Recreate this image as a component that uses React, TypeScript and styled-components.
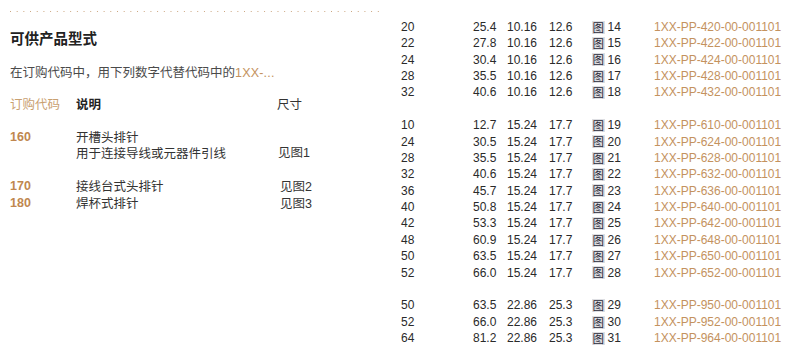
import styled, { createGlobalStyle } from "styled-components";

interface PartRow {
  pins: string;
  length: string;
  pitch: string;
  height: string;
  fig: number;
  code: string;
}

interface OrderOption {
  code: string;
  lines: string[];
  size: string;
  indent?: boolean;
}

const GlobalStyle = createGlobalStyle`
  html, body {
    margin: 0;
    padding: 0;
    background: #ffffff;
  }
  body {
    font-family: "Liberation Sans", Arial, "Noto Sans CJK SC", sans-serif;
    color: #333333;
    overflow: hidden;
  }
`;

const Page = styled.div`
  display: flex;
  width: 800px;
  height: 355px;
  overflow: hidden;
`;

const LeftPanel = styled.section`
  width: 390px;
  flex-shrink: 0;
  padding: 11px 0 0 10px;
  box-sizing: border-box;
`;

const DottedRule = styled.div`
  width: 372px;
  height: 1px;
  background-image: linear-gradient(to right, #caa47e 1px, transparent 1px);
  background-size: 6.7px 1px;
`;

const Title = styled.h2`
  margin: 16px 0 0;
  font-family: "Noto Sans CJK SC", sans-serif;
  font-size: 14.5px;
  font-weight: bold;
  line-height: 20px;
  color: #222222;
`;

const Intro = styled.p`
  margin: 15.8px 0 0;
  font-family: "Noto Sans CJK SC", sans-serif;
  font-size: 12.5px;
  line-height: 16.4px;
  color: #4a4a4a;
`;

const Accent = styled.span`
  font-family: "Liberation Sans", Arial, sans-serif;
  color: #c4925e;
  letter-spacing: 0.2px;
`;

const OrderTable = styled.div`
  margin-top: 14.6px;
  display: flex;
  flex-direction: column;
`;

const OrderRow = styled.div<{ $gapBefore?: boolean }>`
  display: grid;
  grid-template-columns: 66px 201px 1fr;
  line-height: 16.4px;
  font-size: 12.5px;
  font-family: "Noto Sans CJK SC", sans-serif;
  margin-top: ${(p) => (p.$gapBefore ? "16.4px" : "0")};
`;

const HeadCode = styled.span`
  color: #c9a070;
`;

const HeadLabel = styled.span`
  font-weight: bold;
  color: #222222;
`;

const OptionCode = styled.span`
  font-family: "Liberation Sans", Arial, sans-serif;
  font-weight: bold;
  font-size: 12.5px;
  color: #c0874f;
`;

const OptionText = styled.div`
  display: flex;
  flex-direction: column;
  color: #333333;

  & > div {
    height: 16.4px;
  }
`;

const SizeCell = styled.span<{ $indent?: boolean }>`
  align-self: end;
  padding-left: ${(p) => (p.$indent ? "3px" : "1px")};
  color: #333333;
  & b {
    font-weight: normal;
    font-family: "Liberation Sans", Arial, sans-serif;
  }
`;

const RightPanel = styled.section`
  flex: 1;
  padding: 18.8px 0 0 11px;
  display: flex;
  flex-direction: column;
`;

const Group = styled.div`
  display: flex;
  flex-direction: column;
  & + & {
    margin-top: 16.4px;
  }
`;

const PartLine = styled.div`
  display: grid;
  grid-template-columns: 72px 34px 42px 43px 62px 1fr;
  height: 16.4px;
  line-height: 16.4px;
  font-size: 12px;
  color: #2a2a2a;
  white-space: nowrap;
`;

const FigCell = styled.span`
  display: flex;
  align-items: center;
  gap: 3px;
`;

const FigMark = styled.span`
  font-family: "Noto Sans CJK SC", sans-serif;
  font-size: 11.5px;
  line-height: 13px;
  background: #dedfe3;
  color: #2b2b3a;
  padding: 0 0.5px;
`;

const CodeCell = styled.span`
  color: #c4925e;
`;

const options: OrderOption[] = [
  { code: "160", lines: ["开槽头排针", "用于连接导线或元器件引线"], size: "1" },
  { code: "170", lines: ["接线台式头排针"], size: "2", indent: true },
  { code: "180", lines: ["焊杯式排针"], size: "3", indent: true },
];

const mk = (
  pins: number,
  length: string,
  pitch: string,
  height: string,
  fig: number,
  series: number
): PartRow => ({
  pins: String(pins),
  length,
  pitch,
  height,
  fig,
  code: `1XX-PP-${series}${String(pins).padStart(2, "0")}-00-001101`,
});

const groups: PartRow[][] = [
  [
    mk(20, "25.4", "10.16", "12.6", 14, 4),
    mk(22, "27.8", "10.16", "12.6", 15, 4),
    mk(24, "30.4", "10.16", "12.6", 16, 4),
    mk(28, "35.5", "10.16", "12.6", 17, 4),
    mk(32, "40.6", "10.16", "12.6", 18, 4),
  ],
  [
    mk(10, "12.7", "15.24", "17.7", 19, 6),
    mk(24, "30.5", "15.24", "17.7", 20, 6),
    mk(28, "35.5", "15.24", "17.7", 21, 6),
    mk(32, "40.6", "15.24", "17.7", 22, 6),
    mk(36, "45.7", "15.24", "17.7", 23, 6),
    mk(40, "50.8", "15.24", "17.7", 24, 6),
    mk(42, "53.3", "15.24", "17.7", 25, 6),
    mk(48, "60.9", "15.24", "17.7", 26, 6),
    mk(50, "63.5", "15.24", "17.7", 27, 6),
    mk(52, "66.0", "15.24", "17.7", 28, 6),
  ],
  [
    mk(50, "63.5", "22.86", "25.3", 29, 9),
    mk(52, "66.0", "22.86", "25.3", 30, 9),
    mk(64, "81.2", "22.86", "25.3", 31, 9),
  ],
];

const App = () => {
  return (
    <Page>
      <GlobalStyle />
      <LeftPanel>
        <DottedRule />
        <Title>可供产品型式</Title>
        <Intro>
          在订购代码中，用下列数字代替代码中的<Accent>1XX-...</Accent>
        </Intro>
        <OrderTable>
          <OrderRow>
            <HeadCode>订购代码</HeadCode>
            <HeadLabel>说明</HeadLabel>
            <span>尺寸</span>
          </OrderRow>
          {options.map((opt, i) => (
            <OrderRow key={opt.code} $gapBefore={i < 2}>
              <OptionCode>{opt.code}</OptionCode>
              <OptionText>
                {opt.lines.map((line) => (
                  <div key={line}>{line}</div>
                ))}
              </OptionText>
              <SizeCell $indent={opt.indent}>
                见图<b>{opt.size}</b>
              </SizeCell>
            </OrderRow>
          ))}
        </OrderTable>
      </LeftPanel>
      <RightPanel>
        {groups.map((group, gi) => (
          <Group key={gi}>
            {group.map((row) => (
              <PartLine key={row.code}>
                <span>{row.pins}</span>
                <span>{row.length}</span>
                <span>{row.pitch}</span>
                <span>{row.height}</span>
                <FigCell>
                  <FigMark>图</FigMark>
                  <span>{row.fig}</span>
                </FigCell>
                <CodeCell>{row.code}</CodeCell>
              </PartLine>
            ))}
          </Group>
        ))}
      </RightPanel>
    </Page>
  );
};

export default App;
